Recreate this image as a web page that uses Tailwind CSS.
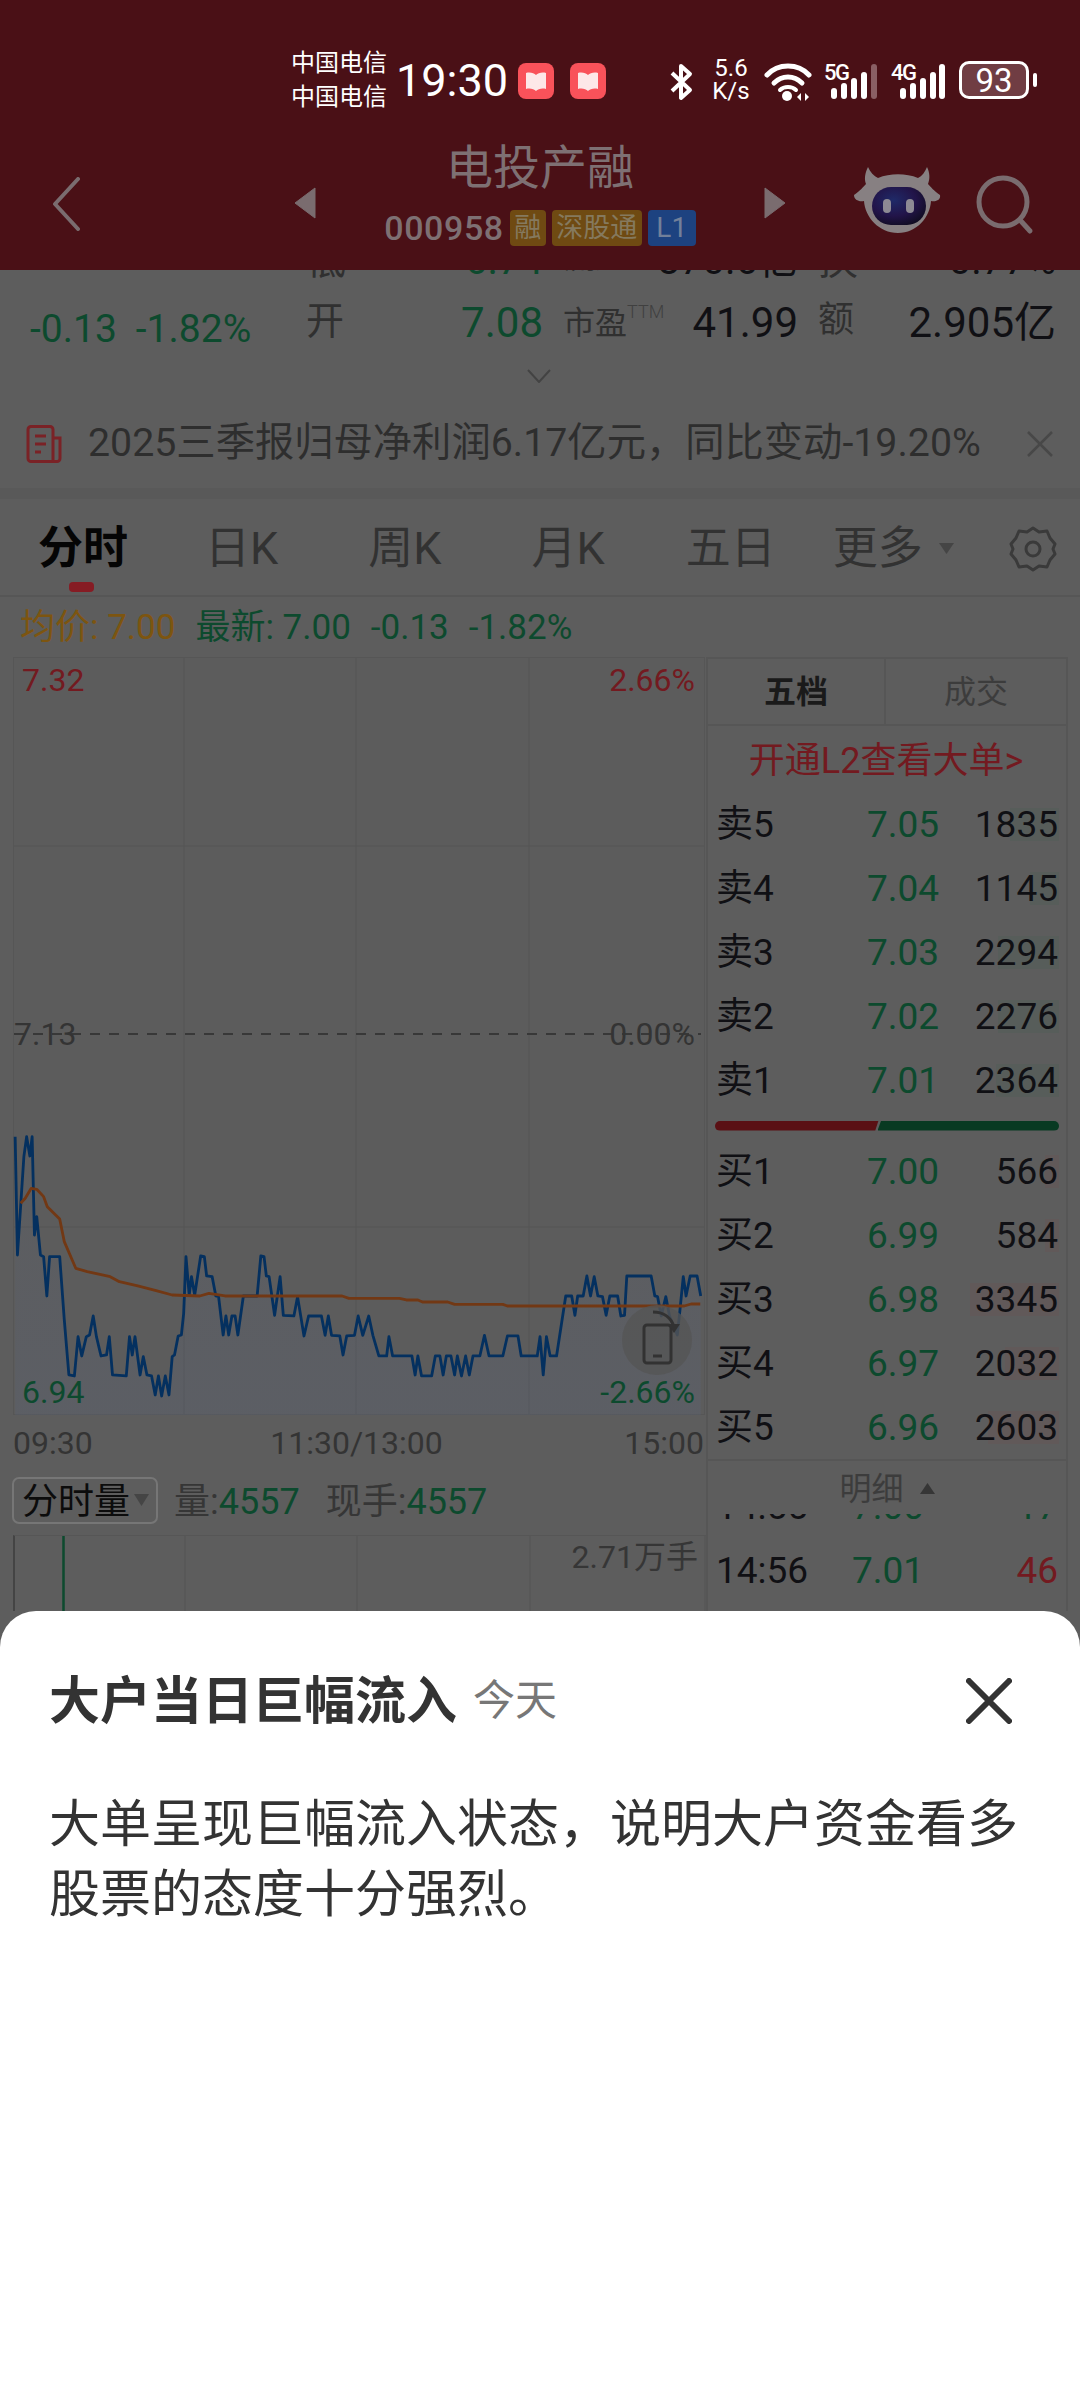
<!DOCTYPE html>
<html lang="zh">
<head>
<meta charset="utf-8">
<script src="https://cdn.jsdelivr.net/npm/@tailwindcss/browser@4"></script>
</head>
<body class="m-0">
<div class="relative flex h-[2400px] w-[1080px] flex-col overflow-hidden bg-[#5d5d5d] font-['Roboto','Noto_Sans_CJK_SC',sans-serif] text-[#101014]">

  <!-- header -->
  <header class="relative z-10 h-[270px] bg-[#4a1016]">
    <div class="flex h-[115px] items-start pl-[291px] pt-[45px] text-white">
      <div class="flex h-[70px] w-[105px] flex-col justify-center gap-[10px] text-[24px] leading-[24px]">
        <span>中国电信</span><span>中国电信</span>
      </div>
      <div class="flex h-[70px] w-[110px] items-center text-[45px] leading-none">19:30</div>
      <div class="ml-[12px] mt-[18px] flex h-[36px] w-[36px] items-center justify-center rounded-[8px] bg-[#f9525a]">
        <svg width="24" height="24" viewBox="0 0 24 24"><path d="M2 4 C6 3 10 4 12 6 C14 4 18 3 22 4 V20 C18 19 14 20 12 22 C10 20 6 19 2 20 Z" fill="#fde8e8"/></svg>
      </div>
      <div class="ml-[16px] mt-[18px] flex h-[36px] w-[36px] items-center justify-center rounded-[8px] bg-[#f9525a]">
        <svg width="24" height="24" viewBox="0 0 24 24"><path d="M2 4 C6 3 10 4 12 6 C14 4 18 3 22 4 V20 C18 19 14 20 12 22 C10 20 6 19 2 20 Z" fill="#fde8e8"/></svg>
      </div>
      <svg class="ml-[63px] mt-[18px]" width="26" height="38" viewBox="0 0 26 38"><path d="M3 10 L21 27 L12 35 V3 L21 11 L3 28" fill="none" stroke="#fff" stroke-width="4" stroke-linejoin="round"/></svg>
      <div class="ml-[16px] mt-[12px] flex w-[40px] flex-col items-center text-[24px] leading-[23px]"><span>5.6</span><span>K/s</span></div>
      <svg class="ml-[13px] mt-[18px]" width="50" height="38" viewBox="0 0 50 38">
        <path d="M3 12 C14 0 34 0 45 12" fill="none" stroke="#fff" stroke-width="5" stroke-linecap="round"/>
        <path d="M10 20 C18 12 30 12 38 20" fill="none" stroke="#fff" stroke-width="5" stroke-linecap="round"/>
        <path d="M16 27 C20 23 28 23 32 27" fill="none" stroke="#fff" stroke-width="4" stroke-linecap="round"/>
        <circle cx="23" cy="33" r="5" fill="#fff"/>
        <path d="M37 30 L33 34 L37 38 Z M41 30 L45 34 L41 38 Z" fill="#fff"/>
      </svg>
      <svg class="ml-[10px] mt-[15px]" width="58" height="42" viewBox="0 0 58 42">
        <text x="0" y="20" font-size="22" font-weight="500" fill="#fff" font-family="Roboto" textLength="26">5G</text>
        <rect x="7" y="28" width="6" height="11" rx="3" fill="#fff"/><rect x="17" y="23" width="6" height="16" rx="3" fill="#fff"/><rect x="27" y="18" width="6" height="21" rx="3" fill="#fff"/><rect x="37" y="12" width="6" height="27" rx="3" fill="#fff"/><rect x="47" y="4" width="6" height="35" rx="3" fill="#8a5f64"/>
      </svg>
      <svg class="ml-[9px] mt-[15px]" width="58" height="42" viewBox="0 0 58 42">
        <text x="0" y="20" font-size="22" font-weight="500" fill="#fff" font-family="Roboto" textLength="26">4G</text>
        <rect x="9" y="28" width="6" height="11" rx="3" fill="#fff"/><rect x="19" y="23" width="6" height="16" rx="3" fill="#fff"/><rect x="29" y="18" width="6" height="21" rx="3" fill="#fff"/><rect x="39" y="12" width="6" height="27" rx="3" fill="#fff"/><rect x="48" y="4" width="6" height="35" rx="3" fill="#fff"/>
      </svg>
      <div class="ml-[10px] mt-[16px] flex h-[38px] w-[70px] items-center justify-center rounded-[10px] border-[3px] border-white bg-[#703d43] text-[33px] leading-none">93</div>
      <div class="ml-[4px] mt-[28px] h-[14px] w-[4px] rounded-[2px] bg-white"></div>
    </div>

    <nav class="flex h-[155px] items-start pl-[52px]">
      <svg class="mt-[62px]" width="28" height="54" viewBox="0 0 28 54"><path d="M26 2 L3 27 L26 52" fill="none" stroke="#7a6c6f" stroke-width="4" stroke-linecap="round" stroke-linejoin="round"/></svg>
      <svg class="ml-[214px] mt-[72px]" width="22" height="32" viewBox="0 0 22 32"><path d="M21 1 V31 L1 16 Z" fill="#7a6c6f" stroke="#7a6c6f" stroke-linejoin="round"/></svg>
      <div class="flex w-[448px] flex-col items-center pt-[25px] text-[#7e7073]">
        <div class="text-[47px] leading-[56px]">电投产融</div>
        <div class="mt-[14px] flex h-[36px] items-center gap-[6px]">
          <span class="text-[34px] font-medium leading-none tracking-[0.600px]">000958</span>
          <span class="flex h-[36px] w-[36px] items-center justify-center rounded-[4px] bg-[#6f4a12] text-[27px] leading-none text-[#85795e]">融</span>
          <span class="flex h-[36px] w-[90px] items-center justify-center rounded-[4px] bg-[#6f4a12] text-[27px] leading-none text-[#85795e]">深股通</span>
          <span class="flex h-[36px] w-[48px] items-center justify-center rounded-[4px] bg-[#1d4280] text-[28px] leading-none text-[#72809a]">L1</span>
        </div>
      </div>
      <svg class="mt-[72px]" width="22" height="32" viewBox="0 0 22 32"><path d="M1 1 V31 L21 16 Z" fill="#7a6c6f" stroke="#7a6c6f" stroke-linejoin="round"/></svg>
      <svg class="ml-[66px] mt-[52px]" width="90" height="68" viewBox="0 0 90 68">
        <defs>
          <radialGradient id="face" cx="0.4" cy="0.35" r="0.75"><stop offset="0" stop-color="#1f2a68"/><stop offset="0.55" stop-color="#221449"/><stop offset="1" stop-color="#0e0b1c"/></radialGradient>
        </defs>
        <path d="M16 0 C18 5 22 9 26 11 C38 6 54 6 66 11 C70 9 73 5 75 0 C78 6 78 12 76 17 C79 20 82 24 88 28 C89 33 84 35 79 34 C78 50 65 66 46 66 C27 66 13 50 12 34 C7 35 2 33 2 28 C8 24 11 20 14 17 C12 12 13 6 16 0 Z" fill="#878082"/>
        <rect x="20" y="20" width="54" height="38" rx="19" fill="url(#face)"/>
        <rect x="31" y="32" width="8" height="14" rx="4" fill="#8d8a94"/><rect x="54" y="32" width="8" height="14" rx="4" fill="#8d8a94"/>
      </svg>
      <svg class="ml-[34px] mt-[60px]" width="60" height="60" viewBox="0 0 60 60"><circle cx="27" cy="27" r="24" fill="none" stroke="#7a6c6f" stroke-width="5"/><path d="M44 45 L54 56" stroke="#7a6c6f" stroke-width="5" stroke-linecap="round"/></svg>
    </nav>
  </header>

  <!-- stock stats -->
  <div class="-mt-[40px] flex h-[1381px] shrink-0 flex-col">
    <section class="relative pl-[306px] pr-[24px]">
      <div class="grid h-[62px] grid-cols-[237px_235px_238px] items-center gap-x-[20px] text-[40px] leading-none">
        <div class="flex justify-between"><span class="text-[#303030]">低</span><span class="text-[#0d4a2e]">6.74</span></div>
        <div class="flex justify-between"><span class="text-[32px] text-[#303030]">流通</span><span>870.6亿</span></div>
        <div class="flex justify-between"><span class="text-[#303030]">换</span><span>0.77%</span></div>
      </div>
      <div class="grid h-[62px] grid-cols-[237px_235px_238px] items-center gap-x-[20px] text-[42px] leading-none">
        <div class="flex justify-between"><span class="text-[38px] text-[#303030]">开</span><span class="text-[#0d4a2e]">7.08</span></div>
        <div class="flex items-center justify-between"><span class="relative text-[32px] text-[#303030]">市盈<sup class="absolute -top-[4px] left-[64px] text-[18px] font-light leading-none text-[#404040]">TTM</sup></span><span>41.99</span></div>
        <div class="flex justify-between"><span class="text-[36px] text-[#303030]">额</span><span>2.905亿</span></div>
      </div>
      <div class="absolute left-[30px] top-[80px] flex gap-[19px] text-[39px] leading-none text-[#0d4a2e]"><span>-0.13</span><span>-1.82%</span></div>
    </section>
    <div class="flex h-[44px] items-center justify-center pr-[2px]">
      <svg width="24" height="14" viewBox="0 0 24 14"><path d="M1 1 L12 13 L23 1" fill="none" stroke="#434343" stroke-width="2"/></svg>
    </div>

    <!-- notice -->
    <div class="flex h-[90px] items-center pl-[26px] pt-[1px]">
      <svg width="36" height="38" viewBox="0 0 36 38"><path d="M5 1.5 H24 A3 3 0 0 1 27 4.5 V36.5 H5 A3 3 0 0 1 2 33.5 V4.5 A3 3 0 0 1 5 1.5 Z M27 13 H34 V33.5 A3 3 0 0 1 31 36.5 H27" fill="none" stroke="#7a2226" stroke-width="3"/><path d="M9 11 H20 M9 19 H20 M9 27 H15" stroke="#7a2226" stroke-width="3"/></svg>
      <span class="ml-[26px] w-[938px] whitespace-nowrap text-[39.300px] leading-none text-[#2e2e2e]">2025三季报归母净利润6.17亿元，同比变动-19.20%</span>
      <svg width="28" height="28" viewBox="0 0 28 28"><path d="M2 2 L26 26 M26 2 L2 26" stroke="#484848" stroke-width="2.500"/></svg>
    </div>
    <div class="h-[11px] bg-[#595959]"></div>

    <!-- tabs -->
    <div class="relative flex h-[98px] items-center border-b-2 border-[#565656] pl-[38px] pt-[3px] text-[45px] leading-none text-[#323232]">
      <span class="font-bold text-[#050505]">分时</span>
      <span class="ml-[77px]">日K</span>
      <span class="ml-[90px]">周K</span>
      <span class="ml-[90px]">月K</span>
      <span class="ml-[81px]">五日</span>
      <span class="ml-[57px]">更多</span>
      <svg class="ml-[16px]" width="15" height="11" viewBox="0 0 15 11"><path d="M0 0 H15 L7.500 11 Z" fill="#454545"/></svg>
      <svg class="ml-[55px]" width="48" height="46" viewBox="0 0 48 46"><path d="M24 2 L30 6 L38 5 L41 12 L46 18 L44 23 L46 28 L41 34 L38 41 L30 40 L24 44 L18 40 L10 41 L7 34 L2 28 L4 23 L2 18 L7 12 L10 5 L18 6 Z" fill="none" stroke="#3a3a3a" stroke-width="3" stroke-linejoin="round"/><circle cx="24" cy="23" r="7" fill="none" stroke="#3a3a3a" stroke-width="3"/></svg>
      <div class="absolute bottom-[3px] left-[69px] h-[10px] w-[25px] rounded-[4px] bg-[#861c24]"></div>
    </div>

    <!-- price line -->
    <div class="flex h-[60px] items-center pl-[20px] text-[35px] leading-none text-[#0d4a2e]">
      <span class="text-[#7d5510]">均价: 7.00</span>
      <span class="ml-[20px]">最新: 7.00</span>
      <span class="ml-[20px]">-0.13</span>
      <span class="ml-[20px]">-1.82%</span>
    </div>

    <div class="flex min-h-0 flex-1 pl-[13px]">
      <!-- left: chart -->
      <div class="flex w-[693px] flex-col">
        <div class="relative h-[758px] w-[692px] shrink-0 text-[32px] leading-none">
          <svg class="absolute inset-0" width="692" height="758" viewBox="0 0 692 758">
            <defs>
              <linearGradient id="area" x1="0" y1="0" x2="0" y2="1"><stop offset="0" stop-color="#5a6a90" stop-opacity="0.05"/><stop offset="1" stop-color="#5a6a90" stop-opacity="0.16"/></linearGradient>
            </defs>
            <rect x="0.500" y="0.500" width="691" height="757" fill="#5c5c5c" stroke="#565656"/>
            <path d="M171 0 V758 M343 0 V758 M516 0 V758 M0 189 H692 M0 570 H692" stroke="#575757" stroke-width="1.500"/>
            <path d="M1 377 H688" stroke="#383838" stroke-width="2" stroke-dasharray="10 9"/>
            <g transform="translate(-13,423) scale(0.4592,0.3333)">
              <polygon fill="url(#area)" points="33,170 38,525 52,230 58,170 65,228 70,170 75,465 80,410 88,525 95,530 102,648 108,530 130,530 140,720 150,885 162,888 170,770 178,828 188,770 195,765 203,708 210,770 220,828 232,825 238,770 245,885 275,888 282,770 288,825 294,770 305,885 312,830 320,885 330,888 338,945 345,888 352,948 360,888 368,945 375,830 380,825 388,768 395,765 400,700 405,530 412,645 417,590 424,645 437,528 445,530 450,588 462,590 470,648 476,650 486,765 492,708 498,765 505,708 512,708 518,765 530,648 560,648 568,528 575,530 580,588 586,590 598,706 610,590 617,706 640,708 648,650 662,768 672,708 700,708 708,766 715,708 722,766 740,768 747,825 755,768 772,766 780,708 790,766 803,708 812,766 825,828 842,828 847,770 855,828 897,828 904,885 910,828 918,888 940,888 948,828 958,828 965,885 972,828 982,828 990,885 996,828 1005,888 1014,828 1022,885 1030,828 1045,828 1055,766 1065,828 1095,828 1105,768 1128,768 1135,828 1170,828 1176,770 1183,885 1190,770 1198,828 1212,828 1232,648 1245,648 1252,706 1258,648 1270,648 1278,588 1286,648 1294,590 1302,648 1312,650 1320,706 1328,648 1345,648 1352,708 1360,706 1365,588 1418,588 1426,648 1432,650 1440,708 1450,650 1458,708 1475,765 1480,700 1488,590 1494,648 1503,588 1518,588 1526,648 1526,1005 33,1005"/>
              <polyline fill="none" stroke="#04305f" stroke-width="2.800" vector-effect="non-scaling-stroke" stroke-linejoin="round" points="33,170 38,525 52,230 58,170 65,228 70,170 75,465 80,410 88,525 95,530 102,648 108,530 130,530 140,720 150,885 162,888 170,770 178,828 188,770 195,765 203,708 210,770 220,828 232,825 238,770 245,885 275,888 282,770 288,825 294,770 305,885 312,830 320,885 330,888 338,945 345,888 352,948 360,888 368,945 375,830 380,825 388,768 395,765 400,700 405,530 412,645 417,590 424,645 437,528 445,530 450,588 462,590 470,648 476,650 486,765 492,708 498,765 505,708 512,708 518,765 530,648 560,648 568,528 575,530 580,588 586,590 598,706 610,590 617,706 640,708 648,650 662,768 672,708 700,708 708,766 715,708 722,766 740,768 747,825 755,768 772,766 780,708 790,766 803,708 812,766 825,828 842,828 847,770 855,828 897,828 904,885 910,828 918,888 940,888 948,828 958,828 965,885 972,828 982,828 990,885 996,828 1005,888 1014,828 1022,885 1030,828 1045,828 1055,766 1065,828 1095,828 1105,768 1128,768 1135,828 1170,828 1176,770 1183,885 1190,770 1198,828 1212,828 1232,648 1245,648 1252,706 1258,648 1270,648 1278,588 1286,648 1294,590 1302,648 1312,650 1320,706 1328,648 1345,648 1352,708 1360,706 1365,588 1418,588 1426,648 1432,650 1440,708 1450,650 1458,708 1475,765 1480,700 1488,590 1494,648 1503,588 1518,588 1526,648"/>
              <polyline fill="none" stroke="#723814" stroke-width="2.800" vector-effect="non-scaling-stroke" stroke-linejoin="round" points="45,370 55,355 68,325 80,328 95,350 103,380 130,417 140,485 165,565 190,575 240,590 260,605 300,618 340,632 375,645 435,648 455,640 490,648 745,648 760,655 870,655 885,660 910,660 920,666 975,666 990,673 1095,673 1105,678 1490,678 1505,672 1525,672"/>
            </g>
          </svg>
          <span class="absolute left-[9px] top-[7px] text-[#731a20]">7.32</span>
          <span class="absolute right-[10px] top-[7px] text-[#731a20]">2.66%</span>
          <span class="absolute left-[1px] top-[361px] text-[#343434]">7.13</span>
          <span class="absolute right-[10px] top-[361px] text-[#343434]">0.00%</span>
          <span class="absolute left-[9px] top-[719px] text-[#0d4a2e]">6.94</span>
          <span class="absolute right-[10px] top-[719px] text-[#0d4a2e]">-2.66%</span>
          <div class="absolute left-[609px] top-[648px] h-[70px] w-[70px] rounded-full bg-[#555555]/80"></div>
          <svg class="absolute left-[620px] top-[650px]" width="60" height="66" viewBox="0 0 60 66">
            <rect x="11" y="18" width="27" height="38" rx="3" fill="none" stroke="#323232" stroke-width="3"/>
            <path d="M20 49 H29" stroke="#323232" stroke-width="3"/>
            <path d="M20 5 C30 5 38 10 41 20" fill="none" stroke="#323232" stroke-width="3"/>
            <path d="M35 17 L41 26 L47 17 Z" fill="#323232"/>
          </svg>
        </div>

        <div class="flex h-[57px] shrink-0 items-center justify-between pb-[1px] text-[32px] leading-none text-[#343434]">
          <span>09:30</span><span class="pr-[4px]">11:30/13:00</span><span class="pr-[2px]">15:00</span>
        </div>

        <div class="flex h-[56px] shrink-0 items-center text-[36px] leading-none text-[#363636]">
          <div class="-ml-px flex h-[47px] w-[146px] items-center rounded-[7px] border-2 border-[#767676] pl-[8px] text-[#0c0c0c]"><span class="pt-[3px]">分时量</span>
            <svg class="ml-[4px]" width="15" height="12" viewBox="0 0 15 12"><path d="M0 0 H15 L7.500 12 Z" fill="#454545"/></svg>
          </div>
          <span class="ml-[16px] pt-[3px]">量:<span class="text-[#0d4a2e]">4557</span></span>
          <span class="ml-[26px] pt-[3px]">现手:<span class="text-[#0d4a2e]">4557</span></span>
        </div>

        <div class="relative mt-[7px] min-h-0 flex-1 border-l-2 border-t border-l-[#444444] border-t-[#565656]">
          <svg class="absolute inset-0" width="692" height="76" viewBox="0 0 692 76"><path d="M170 0 V76 M342 0 V76 M515 0 V76 M690 0 V76" stroke="#575757" stroke-width="1.500"/><path d="M48.500 0 V76" stroke="#0d4a2e" stroke-width="2.500"/></svg>
          <span class="absolute right-[8px] top-[5px] text-[32px] leading-none text-[#363636]">2.71万手</span>
        </div>
      </div>

      <!-- right: order book -->
      <aside class="flex w-[362px] flex-col border-x-2 border-[#565656]">
        <div class="grid h-[69px] shrink-0 grid-cols-[178px_1fr] border-y-2 border-[#565656] text-[32px] leading-none">
          <div class="flex items-center justify-center border-r-2 border-[#565656] font-bold text-[#1a1a1a]">五档</div>
          <div class="flex items-center justify-center text-[#3c3c3c]">成交</div>
        </div>
        <div class="flex h-[66px] shrink-0 items-center justify-center pr-[2px] pt-[3px] text-[36px] leading-none text-[#731a20]">开通L2查看大单&gt;</div>

        <div class="relative flex h-[64px] shrink-0 items-center px-[8px] text-[37px] leading-none"><div class="absolute right-[7px] h-[33px] w-[49px] bg-[#575d5a]"></div><span class="relative w-[151px]">卖5</span><span class="relative text-[#0d4a2e]">7.05</span><span class="relative ml-auto">1835</span></div>
        <div class="relative flex h-[64px] shrink-0 items-center px-[8px] text-[37px] leading-none"><div class="absolute right-[7px] h-[33px] w-[29px] bg-[#575d5a]"></div><span class="relative w-[151px]">卖4</span><span class="relative text-[#0d4a2e]">7.04</span><span class="relative ml-auto">1145</span></div>
        <div class="relative flex h-[64px] shrink-0 items-center px-[8px] text-[37px] leading-none"><div class="absolute right-[7px] h-[33px] w-[61px] bg-[#575d5a]"></div><span class="relative w-[151px]">卖3</span><span class="relative text-[#0d4a2e]">7.03</span><span class="relative ml-auto">2294</span></div>
        <div class="relative flex h-[64px] shrink-0 items-center px-[8px] text-[37px] leading-none"><div class="absolute right-[7px] h-[33px] w-[61px] bg-[#575d5a]"></div><span class="relative w-[151px]">卖2</span><span class="relative text-[#0d4a2e]">7.02</span><span class="relative ml-auto">2276</span></div>
        <div class="relative flex h-[64px] shrink-0 items-center px-[8px] text-[37px] leading-none"><div class="absolute right-[7px] h-[33px] w-[63px] bg-[#575d5a]"></div><span class="relative w-[151px]">卖1</span><span class="relative text-[#0d4a2e]">7.01</span><span class="relative ml-auto">2364</span></div>

        <div class="flex h-[27px] shrink-0 items-center gap-[1px] px-[7px]">
          <div class="h-[10px] w-[164px] rounded-l-[5px] bg-[#5a1014] [clip-path:polygon(0_0,100%_0,98%_100%,0_100%)]"></div>
          <div class="-ml-[2px] h-[10px] w-[182px] rounded-r-[5px] bg-[#083a22] [clip-path:polygon(2%_0,100%_0,100%_100%,0_100%)]"></div>
        </div>

        <div class="relative flex h-[64px] shrink-0 items-center px-[8px] text-[37px] leading-none"><div class="absolute right-[7px] h-[33px] w-[14px] bg-[#615959]"></div><span class="relative w-[151px]">买1</span><span class="relative text-[#0d4a2e]">7.00</span><span class="relative ml-auto">566</span></div>
        <div class="relative flex h-[64px] shrink-0 items-center px-[8px] text-[37px] leading-none"><div class="absolute right-[7px] h-[33px] w-[14px] bg-[#615959]"></div><span class="relative w-[151px]">买2</span><span class="relative text-[#0d4a2e]">6.99</span><span class="relative ml-auto">584</span></div>
        <div class="relative flex h-[64px] shrink-0 items-center px-[8px] text-[37px] leading-none"><div class="absolute right-[7px] h-[33px] w-[89px] bg-[#615959]"></div><span class="relative w-[151px]">买3</span><span class="relative text-[#0d4a2e]">6.98</span><span class="relative ml-auto">3345</span></div>
        <div class="relative flex h-[64px] shrink-0 items-center px-[8px] text-[37px] leading-none"><div class="absolute right-[7px] h-[33px] w-[54px] bg-[#615959]"></div><span class="relative w-[151px]">买4</span><span class="relative text-[#0d4a2e]">6.97</span><span class="relative ml-auto">2032</span></div>
        <div class="relative flex h-[64px] shrink-0 items-center px-[8px] text-[37px] leading-none"><div class="absolute right-[7px] h-[33px] w-[71px] bg-[#615959]"></div><span class="relative w-[151px]">买5</span><span class="relative text-[#0d4a2e]">6.96</span><span class="relative ml-auto">2603</span></div>

        <div class="flex h-[55px] shrink-0 items-center justify-center gap-[16px] border-t-2 border-[#565656] pt-[2px] text-[32px] leading-none text-[#3c3c3c]">
          <span>明细</span>
          <svg width="15" height="11" viewBox="0 0 15 11"><path d="M7.500 0 L15 11 H0 Z" fill="#363636"/></svg>
        </div>

        <div class="min-h-0 flex-1 overflow-hidden text-[37px] leading-none">
          <div class="-mt-[40px] flex h-[64px] items-center px-[8px]"><span class="w-[136px]">14:55</span><span class="text-[#0d4a2e]">7.00</span><span class="ml-auto text-[#0d4a2e]">17</span></div>
          <div class="flex h-[64px] items-center px-[8px]"><span class="w-[136px]">14:56</span><span class="text-[#0d4a2e]">7.01</span><span class="ml-auto text-[#731a20]">46</span></div>
        </div>
      </aside>
    </div>
  </div>

  <!-- bottom sheet -->
  <section class="relative z-20 min-h-0 flex-1 rounded-t-[36px] bg-white pl-[49px] pr-[50px] pt-[63px] text-[#333333]">
    <div class="flex h-[54px] items-center">
      <span class="text-[51px] font-bold leading-none">大户当日巨幅流入</span>
      <span class="ml-[16px] text-[42px] leading-none text-[#777777]">今天</span>
      <svg class="ml-auto mr-[18px]" width="46" height="46" viewBox="0 0 46 46"><path d="M3 3 L43 43 M43 3 L3 43" stroke="#333" stroke-width="6" stroke-linecap="round"/></svg>
    </div>
    <p class="mt-[62px] w-[985px] text-[51px] leading-[70px]">大单呈现巨幅流入状态，说明大户资金看多股票的态度十分强烈。</p>
  </section>
</div>
</body>
</html>
